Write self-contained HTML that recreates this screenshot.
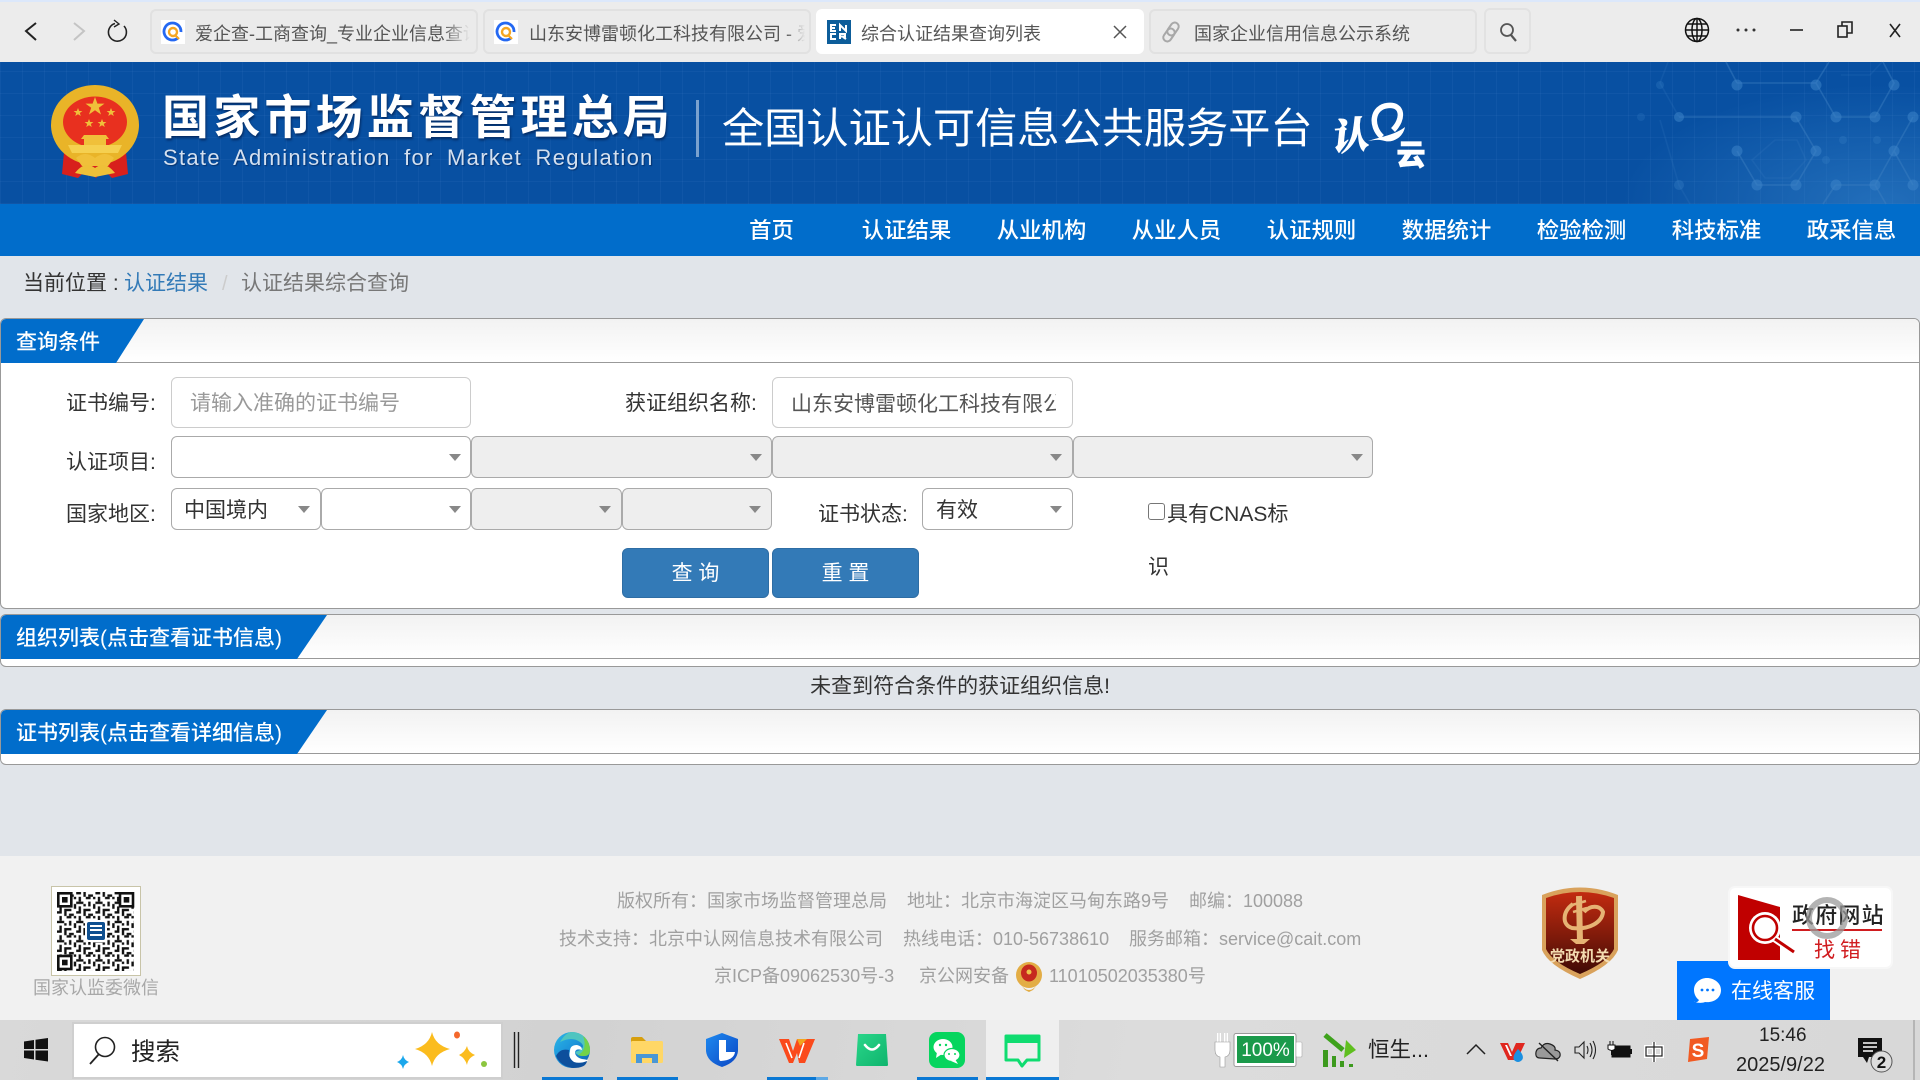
<!DOCTYPE html>
<html lang="zh-CN"><head><meta charset="utf-8"><title>综合认证结果查询列表</title>
<style>
*{box-sizing:border-box;margin:0;padding:0}
html,body{width:1920px;height:1080px;overflow:hidden;background:#e1e5ea}
body{position:relative;font-family:"Liberation Sans","Noto Sans CJK SC",sans-serif;color:#333}
.a{position:absolute}
.t{position:absolute;white-space:nowrap;line-height:30px;height:30px}
.tab{position:absolute;top:9px;width:328px;height:45px;background:#ebebeb;border:2px solid #e1e1e1;border-radius:6px}
.tt{position:absolute;top:19px;height:30px;line-height:30px;font-size:18px;color:#555;white-space:nowrap;overflow:hidden}
.nav{position:absolute;top:216px;width:135px;text-align:center;font-size:22.4px;font-weight:500;line-height:30px;color:#fff}
.panel{position:absolute;left:0;width:1920px;background:#fff;border:1px solid #999;border-radius:6px;overflow:hidden}
.head{position:absolute;left:0;top:0;width:100%;height:44px;background:linear-gradient(#f2f2f2,#fff);border-bottom:1px solid #999}
.blue{position:absolute;left:0;top:0;height:44px;background:#016dcb}
.ptxt{position:absolute;color:#fff;font-size:21px;font-weight:500;line-height:30px;height:30px;white-space:nowrap}
.lb{font-size:21px;color:#333}
.box{position:absolute;background:#fff;border:1px solid #ccc;border-radius:6px}
.sel{position:absolute;background:#fff;border:1px solid #aaa;border-radius:6px;height:42px}
.sel.d{background:#eee}
.sel i{position:absolute;right:9px;top:17px;width:0;height:0;border-left:6px solid transparent;border-right:6px solid transparent;border-top:7px solid #888}
.btn{position:absolute;top:548px;height:50px;background:#337ab7;border:1px solid #2e6da4;border-radius:6px;color:#fff;font-size:21px;line-height:49px;text-align:center}
.f{position:absolute;font-size:18px;line-height:24px;color:#a0a0a0;white-space:nowrap}
.ul{position:absolute;top:1077px;height:3px;background:#0a78d4}
</style></head><body>

<!-- browser chrome -->
<div class="a" style="left:0;top:0;width:1920px;height:62px;background:#ececec"></div>
<div class="a" style="left:0;top:0;width:1920px;height:2px;background:#dce8fb"></div>
<div class="tab" style="left:150px"></div>
<div class="tab" style="left:483px"></div>
<div class="tab" style="left:816px;background:#fff;border-color:#fff"></div>
<div class="tab" style="left:1149px"></div>
<div class="a" style="left:1484px;top:8px;width:47px;height:46px;background:#ececec;border:2px solid #e2e2e2;border-radius:6px"></div>
<div class="tt" style="left:195px;width:275px;-webkit-mask-image:linear-gradient(90deg,#000 90%,transparent)">爱企查-工商查询_专业企业信息查询</div>
<div class="tt" style="left:529px;width:276px;-webkit-mask-image:linear-gradient(90deg,#000 93%,transparent)">山东安博雷顿化工科技有限公司 - 爱企查</div>
<div class="tt" style="left:861px">综合认证结果查询列表</div>
<div class="tt" style="left:1194px">国家企业信用信息公示系统</div>

<!-- site header -->
<div class="a" style="left:0;top:62px;width:1920px;height:142px;background:radial-gradient(ellipse 260px 120px at 1880px 142px,rgba(60,140,210,.5),transparent),repeating-linear-gradient(90deg,rgba(120,170,230,.07) 0 1px,transparent 1px 22px),repeating-linear-gradient(0deg,rgba(120,170,230,.07) 0 1px,transparent 1px 22px),#0850a2"></div>
<div class="a" style="left:0;top:204px;width:1920px;height:52px;background:#016dcb"></div>
<div class="t" style="left:162px;top:90px;height:56px;line-height:56px;font-size:47px;font-weight:700;letter-spacing:4.2px;color:#fff;text-shadow:1px 2px 2px rgba(0,20,60,.6)">国家市场监督管理总局</div>
<div class="t" style="left:163px;top:144px;height:28px;line-height:28px;font-size:22px;letter-spacing:1.3px;word-spacing:6px;color:#d3e0f0;text-shadow:1px 1px 1px rgba(0,20,60,.5)">State Administration  for  Market Regulation</div>
<div class="a" style="left:696px;top:100px;width:3px;height:57px;background:#7ba2cf"></div>
<div class="t" style="left:722px;top:99px;height:60px;line-height:60px;font-size:42.2px;color:#fff">全国认证认可信息公共服务平台</div>
<div class="nav" style="left:704px">首页</div><div class="nav" style="left:839px">认证结果</div><div class="nav" style="left:974px">从业机构</div><div class="nav" style="left:1109px">从业人员</div><div class="nav" style="left:1244px">认证规则</div><div class="nav" style="left:1379px">数据统计</div><div class="nav" style="left:1514px">检验检测</div><div class="nav" style="left:1649px">科技标准</div><div class="nav" style="left:1784px">政采信息</div>

<!-- breadcrumb -->
<div class="t" style="left:23px;top:269px;font-size:21px;color:#333">当前位置 :</div>
<div class="t" style="left:124px;top:269px;font-size:21px;color:#337ab7">认证结果</div>
<div class="t" style="left:222px;top:269px;font-size:20px;color:#ccc">/</div>
<div class="t" style="left:241px;top:269px;font-size:21px;color:#777">认证结果综合查询</div>

<!-- panel 1 -->
<div class="panel" style="top:318px;height:291px"><div class="head"></div><div class="blue" style="width:143px;clip-path:polygon(0 0,100% 0,115px 100%,0 100%)"></div></div>
<div class="ptxt" style="left:16px;top:327.5px">查询条件</div>
<div class="t lb" style="left:66px;top:389px">证书编号:</div>
<div class="box" style="left:171px;top:377px;width:300px;height:51px"></div>
<div class="t" style="left:190px;top:389px;font-size:21px;color:#999">请输入准确的证书编号</div>
<div class="t lb" style="left:625px;top:389px">获证组织名称:</div>
<div class="box" style="left:772px;top:377px;width:301px;height:51px"></div>
<div class="t" style="left:791px;top:390px;width:265px;overflow:hidden;font-size:21px;color:#555">山东安博雷顿化工科技有限公司</div>
<div class="t lb" style="left:66px;top:448px">认证项目:</div>
<div class="sel" style="left:171px;top:436px;width:300px"><i></i></div>
<div class="sel d" style="left:471px;top:436px;width:301px"><i style="right:9px"></i></div>
<div class="sel d" style="left:772px;top:436px;width:301px"><i style="right:10px"></i></div>
<div class="sel d" style="left:1073px;top:436px;width:300px"><i style="right:9px"></i></div>
<div class="t lb" style="left:66px;top:500px">国家地区:</div>
<div class="sel" style="left:171px;top:488px;width:150px"><i style="right:10px"></i></div>
<div class="sel" style="left:321px;top:488px;width:150px"><i></i></div>
<div class="sel d" style="left:471px;top:488px;width:151px"><i style="right:10px"></i></div>
<div class="sel d" style="left:622px;top:488px;width:150px"><i style="right:10px"></i></div>
<div class="t" style="left:184px;top:496px;font-size:21px;color:#333">中国境内</div>
<div class="t lb" style="left:818px;top:500px">证书状态:</div>
<div class="sel" style="left:922px;top:488px;width:151px"><i style="right:10px"></i></div>
<div class="t" style="left:936px;top:496px;font-size:21px;color:#333">有效</div>
<div class="a" style="left:1148px;top:503px;width:17px;height:17px;background:#fff;border:1.5px solid #767676;border-radius:3px"></div>
<div class="t lb" style="left:1167px;top:500px">具有CNAS标</div>
<div class="t lb" style="left:1148px;top:553px">识</div>
<div class="btn" style="left:622px;width:147px">查 询</div>
<div class="btn" style="left:772px;width:147px">重 置</div>

<!-- panel 2, 3 -->
<div class="panel" style="top:614px;height:53px"><div class="head"></div><div class="blue" style="width:326px;clip-path:polygon(0 0,100% 0,296px 100%,0 100%)"></div></div>
<div class="ptxt" style="left:16px;top:623.5px">组织列表(点击查看证书信息)</div>
<div class="t" style="left:0;width:1920px;top:671.5px;text-align:center;font-size:21px;color:#333">未查到符合条件的获证组织信息!</div>
<div class="panel" style="top:709px;height:56px"><div class="head"></div><div class="blue" style="width:326px;clip-path:polygon(0 0,100% 0,296px 100%,0 100%)"></div></div>
<div class="ptxt" style="left:16px;top:719px">证书列表(点击查看详细信息)</div>

<!-- footer -->
<div class="a" style="left:0;top:856px;width:1920px;height:164px;background:#f1f1f1"></div>
<div class="f" style="left:33px;top:976px;color:#a8a8a8">国家认监委微信</div>
<div class="f" style="left:617px;top:889px">版权所有：国家市场监督管理总局</div>
<div class="f" style="left:907px;top:889px">地址：北京市海淀区马甸东路9号</div>
<div class="f" style="left:1189px;top:889px">邮编：100088</div>
<div class="f" style="left:559px;top:927px">技术支持：北京中认网信息技术有限公司</div>
<div class="f" style="left:903px;top:927px">热线电话：010-56738610</div>
<div class="f" style="left:1129px;top:927px">服务邮箱：service@cait.com</div>
<div class="f" style="left:714px;top:964px">京ICP备09062530号-3</div>
<div class="f" style="left:919px;top:964px">京公网安备</div>
<div class="f" style="left:1049px;top:964px">11010502035380号</div>

<!-- online service -->
<div class="a" style="left:1677px;top:961px;width:153px;height:59px;background:#0076ff"></div>

<!-- taskbar -->
<div class="a" style="left:0;top:1020px;width:1920px;height:60px;background:linear-gradient(100deg,#d9d9d9,#d2d2d2 30%,#dcdcdc 60%,#d8d8d8)"></div>
<div class="a" style="left:72px;top:1022px;width:431px;height:57px;background:#fff;border:2px solid #cfcfcf"></div>
<div class="a" style="left:986px;top:1020px;width:73px;height:60px;background:#efefef"></div>
<div class="ul" style="left:542px;width:61px"></div><div class="ul" style="left:617px;width:61px"></div><div class="ul" style="left:767px;width:49px"></div><div class="ul" style="left:816px;width:12px;background:#5ea9e6"></div><div class="ul" style="left:917px;width:61px"></div><div class="ul" style="left:986px;width:73px"></div>
<div class="t" style="left:131px;top:1038px;font-size:24.5px;color:#222">搜索</div>
<div class="t" style="left:1368px;top:1035px;font-size:21.5px;color:#222">恒生...</div>
<div class="t" style="left:1759px;top:1021px;font-size:19px;color:#222">15:46</div>
<div class="t" style="left:1736px;top:1050px;font-size:20px;color:#222">2025/9/22</div>
<div class="a" style="left:1913px;top:1020px;width:2px;height:60px;background:#b5b5b5"></div>

<svg class="a" style="left:0;top:0" width="1920" height="1080" viewBox="0 0 1920 1080">
<defs>
<pattern id="qr" width="19.2" height="19.2" patternUnits="userSpaceOnUse" x="57" y="892">
<rect width="19.2" height="19.2" fill="#fff"/>
<g fill="#111"><rect x="0" y="0" width="4.8" height="2.4"/><rect x="7.2" y="0" width="2.4" height="4.8"/><rect x="12" y="2.4" width="4.8" height="2.4"/><rect x="2.4" y="4.8" width="2.4" height="4.8"/><rect x="9.6" y="4.8" width="4.8" height="2.4"/><rect x="16.8" y="4.8" width="2.4" height="2.4"/><rect x="0" y="9.6" width="7.2" height="2.4"/><rect x="12" y="9.6" width="2.4" height="4.8"/><rect x="7.2" y="12" width="2.4" height="2.4"/><rect x="16.8" y="12" width="2.4" height="4.8"/><rect x="2.4" y="14.4" width="2.4" height="4.8"/><rect x="7.2" y="16.8" width="7.2" height="2.4"/></g>
</pattern>
<linearGradient id="shield" x1="0" y1="0" x2="0" y2="1"><stop offset="0" stop-color="#c22b10"/><stop offset=".55" stop-color="#7e1a0a"/><stop offset="1" stop-color="#3f0a05"/></linearGradient>
<linearGradient id="edge" x1="0" y1="0" x2="1" y2="1"><stop offset="0" stop-color="#2bb8e8"/><stop offset=".5" stop-color="#1b8fd8"/><stop offset="1" stop-color="#0f5fae"/></linearGradient>
<linearGradient id="bag" x1="0" y1="0" x2="1" y2="1"><stop offset="0" stop-color="#2ad68a"/><stop offset="1" stop-color="#0fb46d"/></linearGradient>
<linearGradient id="lsh" x1="0" y1="0" x2="1" y2="1"><stop offset="0" stop-color="#1e8af0"/><stop offset="1" stop-color="#0b46c4"/></linearGradient>
</defs>

<!-- toolbar icons -->
<path d="M36 23 L26 31 L36 40" fill="none" stroke="#222" stroke-width="2"/>
<path d="M74 23 L84 31 L74 40" fill="none" stroke="#c4c4c4" stroke-width="2"/>
<path d="M115 23.5 A9 9 0 1 0 124 26" fill="none" stroke="#222" stroke-width="1.6"/><path d="M114 20 L119 24 L114 27" fill="none" stroke="#222" stroke-width="1.4"/>
<rect x="161" y="20" width="24" height="24" fill="#fff"/><path d="M178 38 A8.5 8.5 0 1 1 181 32" fill="none" stroke="#2468f2" stroke-width="2.8"/><circle cx="173" cy="32" r="4" fill="none" stroke="#f5a623" stroke-width="2.4"/><path d="M175 35 L179 39" stroke="#f5a623" stroke-width="2.2"/>
<rect x="494" y="20" width="24" height="24" fill="#fff"/><path d="M511 38 A8.5 8.5 0 1 1 514 32" fill="none" stroke="#2468f2" stroke-width="2.8"/><circle cx="506" cy="32" r="4" fill="none" stroke="#f5a623" stroke-width="2.4"/><path d="M508 35 L512 39" stroke="#f5a623" stroke-width="2.2"/>
<rect x="827" y="20" width="24" height="24" fill="#0d5d9a"/><g fill="none" stroke="#fff" stroke-width="2"><path d="M836 25 H831 V31 H836 M831 28 H835"/><path d="M836 34 H831 V39 H836"/><path d="M840 31 V25 L846 31 V25"/><path d="M840 39 V34 H845 V36.5 H840 M843 37 L846 39"/></g>
<path d="M1114 26 L1126 38 M1126 26 L1114 38" stroke="#555" stroke-width="1.5"/>
<g fill="none" stroke="#a8a8a8" stroke-width="2"><rect x="1169" y="22" width="8" height="14" rx="4" transform="rotate(35 1173 29)"/><rect x="1165" y="28" width="8" height="14" rx="4" transform="rotate(35 1169 35)"/></g>
<circle cx="1507" cy="30" r="6" fill="none" stroke="#555" stroke-width="1.8"/><path d="M1511 35 L1516 41" stroke="#555" stroke-width="2.2"/>
<g fill="none" stroke="#111" stroke-width="1.5"><circle cx="1697" cy="30" r="11.5"/><ellipse cx="1697" cy="30" rx="5" ry="11.5"/><path d="M1697 18.5 V41.5 M1685.5 30 H1708.5 M1687 24 H1707 M1687 36 H1707"/></g>
<g fill="#333"><circle cx="1738" cy="30" r="1.5"/><circle cx="1746" cy="30" r="1.5"/><circle cx="1754" cy="30" r="1.5"/></g>
<path d="M1790 30 H1803" stroke="#222" stroke-width="1.6"/>
<g fill="none" stroke="#222" stroke-width="1.6"><rect x="1838" y="26" width="9" height="11"/><path d="M1842 26 V22 H1852 V33 H1847"/></g>
<path d="M1890 24 L1900 37 M1900 24 L1890 37" stroke="#222" stroke-width="1.6"/>

<!-- hex decoration -->
<g fill="none" stroke="#3e80c2" stroke-width="1.6" opacity=".45">
<path d="M1737 83 H1816 L1835.5 117 H1875 L1894 83 L1883 62 M1816 83 L1829 62 M1737 83 L1726 62"/>
<path d="M1679 117 H1796 L1816 151 L1796 185 H1757 L1737 151"/>
<path d="M1835.5 185 H1875 L1894 151 L1913 117 M1894 151 L1913 185 M1835.5 185 L1823 204 M1875 185 L1886 204"/>
<path d="M1679 117 L1660 83 L1668 62 M1660 120 L1679 185 L1690 204" opacity=".4"/>
<path d="M1841 75 L1870 75 L1882 62 M1775 140 L1797 140 L1806 160 L1790 178 L1765 178 L1752 160 Z" opacity=".4"/>
</g>
<g fill="#3c83c8" opacity=".55"><circle cx="1737" cy="85" r="5.5"/><circle cx="1816" cy="85" r="5.5"/><circle cx="1894" cy="85" r="5.5"/><circle cx="1836" cy="117" r="5.5"/><circle cx="1875" cy="117" r="5.5"/><circle cx="1913" cy="117" r="5.5"/><circle cx="1796" cy="117" r="5.5"/><circle cx="1679" cy="117" r="5"/><circle cx="1737" cy="151" r="5.5"/><circle cx="1816" cy="151" r="5.5"/><circle cx="1894" cy="151" r="5.5"/><circle cx="1757" cy="185" r="5.5"/><circle cx="1796" cy="185" r="5.5"/><circle cx="1836" cy="185" r="5.5"/><circle cx="1875" cy="185" r="5.5"/><circle cx="1913" cy="185" r="5.5"/><circle cx="1660" cy="85" r="4" opacity=".5"/><circle cx="1641" cy="117" r="4" opacity=".4"/><circle cx="1679" cy="185" r="5" opacity=".6"/><circle cx="1826" cy="160" r="4" opacity=".5"/><circle cx="1843" cy="140" r="4" opacity=".5"/><circle cx="1877" cy="140" r="4" opacity=".5"/></g>

<!-- emblem -->
<path d="M64 152 L62 174 L78 178 L86 170 L96 178 L104 170 L112 178 L128 174 L126 152 Z" fill="#d8201c"/>
<ellipse cx="95" cy="125" rx="44" ry="40" fill="#e9b428"/>
<ellipse cx="95" cy="122" rx="32" ry="25.5" fill="#e8301f"/>
<g fill="#f0c03a">
<polygon points="95,97 97.4,103.6 104.5,103.6 98.8,107.7 101,114.5 95,110.3 89,114.5 91.2,107.7 85.5,103.6 92.6,103.6"/>
<polygon points="78,108 79.2,111 82.4,111 79.8,113 80.8,116 78,114.2 75.2,116 76.2,113 73.6,111 76.8,111"/>
<polygon points="111,108 112.2,111 115.4,111 112.8,113 113.8,116 111,114.2 108.2,116 109.2,113 106.6,111 109.8,111"/>
<polygon points="89,119 90.2,122 93.4,122 90.8,124 91.8,127 89,125.2 86.2,127 87.2,124 84.6,122 87.8,122"/>
<polygon points="102,119 103.2,122 106.4,122 103.8,124 104.8,127 102,125.2 99.2,127 100.2,124 97.6,122 100.8,122"/>
<path d="M84 135 H106 L109 139 H106 V145 H84 V139 H81 Z"/>
<path d="M68 145 H122 L118 153 H72 Z" fill="#f5d050"/>
<path d="M76 158 Q85 150 95 158 Q105 150 114 158 L108 166 H82 Z"/>
<path d="M75 173 Q85 160 95 168 Q105 160 115 173 Q105 175 95 177 Q85 175 75 173 Z" fill="#eec038"/>
</g>

<!-- 认云 logo -->
<text x="0" y="0" font-family="Noto Serif CJK SC,serif" font-weight="900" font-size="37" fill="#fff" stroke="#fff" stroke-width=".8" transform="translate(1332 151) rotate(-6) skewX(-12)">认</text>
<path d="M1382 137 C1370 126 1372 107 1388 105.5 C1403 104 1404 119 1393 130" fill="none" stroke="#fff" stroke-width="5.5"/>
<path d="M1368 141 C1380 137 1395 135 1405 127 C1403 138 1392 143 1385 141 C1378 139 1374 140 1368 141 Z" fill="#fff"/>
<text x="1396.5" y="165" font-family="Noto Sans CJK SC,sans-serif" font-weight="900" font-size="29" fill="#fff" stroke="#fff" stroke-width=".6">云</text>

<!-- QR -->
<rect x="51.5" y="886.5" width="89" height="89" fill="#fff" stroke="#c8c4a8"/>
<rect x="57" y="892" width="77" height="79" fill="url(#qr)"/>
<g fill="#fff" stroke="#111" stroke-width="2.6"><rect x="58.3" y="893.3" width="13" height="13"/><rect x="120" y="893.3" width="13" height="13"/><rect x="58.3" y="956" width="13" height="13"/></g>
<g fill="#111"><rect x="62" y="897" width="5.6" height="5.6"/><rect x="123.7" y="897" width="5.6" height="5.6"/><rect x="62" y="959.7" width="5.6" height="5.6"/></g>
<rect x="85" y="920" width="22" height="22" fill="#fff"/><rect x="87" y="922" width="18" height="18" rx="2" fill="#0e4f90"/><path d="M90 926 H102 M90 930 H102 M90 935 H102" stroke="#fff" stroke-width="2"/>

<!-- police emblem -->
<ellipse cx="1029" cy="975" rx="13" ry="13" fill="#e3ad45"/><ellipse cx="1029" cy="973" rx="8" ry="8.5" fill="#c62a1f"/><circle cx="1029" cy="972" r="2.5" fill="#eec44a"/><path d="M1021 985 Q1029 995 1037 985 L1033 990 L1029 992 L1025 990 Z" fill="#e3ad45"/>

<!-- party badge -->
<path d="M1542 895 Q1580 880 1618 895 V950 Q1612 965 1580 979 Q1548 965 1542 950 Z" fill="#d9a25c"/>
<path d="M1546 898 Q1580 886 1614 898 V949 Q1608 962 1580 974 Q1552 962 1546 949 Z" fill="url(#shield)"/>
<g fill="none" stroke="#e6b374"><path d="M1579 896 L1580 942" stroke-width="6"/><path d="M1572 905 L1586 901 M1573 912 L1587 908" stroke-width="2.5"/><path d="M1573 904 C1562 912 1562 925 1572 928 C1590 930 1602 922 1603 912 C1600 905 1590 905 1584 912" stroke-width="4"/></g>
<path d="M1570 939 H1590 L1584 944 H1576 Z" fill="#e6b374"/>
<text x="1580" y="961" text-anchor="middle" font-family="Noto Sans CJK SC,sans-serif" font-weight="700" font-size="15" fill="#f3dbb0">党政机关</text>

<!-- gov find error -->
<rect x="1729" y="887" width="163" height="81" rx="6" fill="#fff" stroke="#f7f7f7" stroke-width="2"/>
<path d="M1738 895 L1780 907 V960 H1738 Z" fill="#c00000"/>
<circle cx="1765" cy="928" r="16" fill="#fff"/><circle cx="1765" cy="928" r="12" fill="#fff" stroke="#c00000" stroke-width="2.6"/>
<path d="M1775 939 L1794 952" stroke="#fff" stroke-width="7"/><path d="M1775 939 L1794 952" stroke="#c00000" stroke-width="3"/>
<text x="1792" y="923" font-family="Noto Sans CJK SC,sans-serif" font-size="22" letter-spacing="1.2" font-weight="500" fill="#222">政府网站</text>
<rect x="1792" y="929" width="90" height="2" fill="#d01c1f"/>
<text x="1814" y="957" font-family="Noto Sans CJK SC,sans-serif" font-size="21" letter-spacing="5" fill="#d01c1f">找错</text>
<circle cx="1827" cy="918" r="18" fill="none" stroke="#999" stroke-width="6" opacity=".75"/>

<!-- online service icon+text -->
<path d="M1707 978 C1700 978 1694 983 1694 990 C1694 994 1696 998 1699 1000 C1698 1002 1696 1003 1694 1001.5 C1698 1003.5 1703 1003 1705 1002 C1714 1003 1721 998 1721 990 C1721 983 1714 978 1707 978 Z" fill="#fff"/>
<g fill="#0076ff"><circle cx="1702" cy="990" r="1.4"/><circle cx="1707.5" cy="990" r="1.4"/><circle cx="1713" cy="990" r="1.4"/></g>
<text x="1731" y="998" font-family="Noto Sans CJK SC,sans-serif" font-size="21" fill="#fff">在线客服</text>

<!-- taskbar icons -->
<g fill="#111"><polygon points="24,1041.5 34,1040 34,1049 24,1049"/><polygon points="35.5,1039.8 48,1038 48,1049 35.5,1049"/><polygon points="24,1050.5 34,1050.5 34,1059.5 24,1058"/><polygon points="35.5,1050.5 48,1050.5 48,1061.5 35.5,1059.8"/></g>
<circle cx="105" cy="1047" r="9.5" fill="none" stroke="#222" stroke-width="1.6"/><path d="M99 1054 L90 1064" stroke="#222" stroke-width="1.8"/>
<path d="M432 1032 Q435 1045 450 1049 Q435 1053 432 1066 Q429 1053 415 1049 Q429 1045 432 1032 Z" fill="#fbbc1e"/>
<path d="M467 1046 Q468 1052 475 1055 Q468 1058 467 1065 Q465 1058 459 1055 Q465 1052 467 1046 Z" fill="#fbbc1e"/>
<path d="M403 1055 Q404 1060 409 1062 Q404 1064 403 1069 Q402 1064 397 1062 Q402 1060 403 1055 Z" fill="#1aa7ec"/>
<ellipse cx="457" cy="1035" rx="3" ry="3.5" fill="#f4682c"/><circle cx="484" cy="1064" r="3" fill="#8cc63f"/>
<path d="M514.5 1032 V1068 M518.5 1032 V1068" stroke="#222" stroke-width="1.4"/>

<!-- edge -->
<circle cx="572" cy="1050" r="18" fill="url(#edge)"/>
<path d="M572 1032 A18 18 0 0 1 590 1050 Q590 1056 584 1056 Q577 1056 575 1052 Q588 1048 580 1042 Q572 1036 560 1042 Q566 1032 572 1032 Z" fill="#4fc5c0"/>
<path d="M583 1036 A18 18 0 0 1 590 1050 Q590 1056 584 1056 Q580 1056 578 1055 Q588 1050 583 1036 Z" fill="#73d24a"/>
<path d="M570 1051 Q570 1045 577 1045 Q582 1046 582 1050 Q576 1048 575 1052 Q575 1057 582 1059 Q590 1060 587 1061 Q580 1066 573 1064 Q568 1059 570 1051 Z" fill="#fff"/>
<path d="M556 1056 Q560 1066 573 1068 Q586 1068 587 1061 Q580 1064 574 1062 Q568 1058 569 1050 Q560 1048 556 1056 Z" fill="#0d4f9c"/>
<!-- folder -->
<path d="M631 1039 Q631 1037 633 1037 H642 L646 1041 V1046 H631 Z" fill="#d79f0e"/>
<rect x="631" y="1041" width="32" height="22" rx="1.5" fill="#ffd766"/>
<path d="M636 1063 V1054 H658 V1063 H652 V1058 H642 V1063 Z" fill="#4a97d6"/>
<!-- L shield -->
<path d="M722 1033 L738 1039 V1051 Q737 1062 722 1067 Q707 1062 706 1051 V1039 Z" fill="url(#lsh)"/>
<path d="M719 1040 H726 V1052 H735 Q734 1060 721 1061 Q719 1061 719 1058 Z" fill="#fff"/>
<!-- W -->
<path d="M779 1039 H789 L793 1051 L797 1039 H815 L805 1063 H799 L797 1053 L793 1063 H789 Z" fill="#fb4a1c"/><path d="M797 1039 H807 L800 1046 Z" fill="#f2a51e"/><path d="M786 1043 L792 1058 M804 1043 L799 1058" stroke="#fff" stroke-width="1.6"/>
<!-- bag -->
<path d="M858 1034 H886 L888 1065 Q888 1066 886 1066 H858 Q856 1066 856 1065 Z" fill="url(#bag)"/>
<path d="M865 1045 Q872 1054 879 1045" fill="none" stroke="#fff" stroke-width="2.6" stroke-linecap="round"/>
<!-- wechat -->
<rect x="929" y="1032" width="36" height="36" rx="8" fill="#06d55e"/>
<ellipse cx="943" cy="1047" rx="9.5" ry="8" fill="#fff"/><path d="M937 1052 L936 1058 L942 1054 Z" fill="#fff"/>
<ellipse cx="952" cy="1055" rx="8" ry="6.5" fill="#fff" stroke="#06d55e" stroke-width="1.2"/><path d="M955 1059 L958 1064 L951 1061 Z" fill="#fff"/>
<g fill="#06d55e"><circle cx="940" cy="1045" r="1.2"/><circle cx="946" cy="1045" r="1.2"/><circle cx="949" cy="1054" r="1"/><circle cx="955" cy="1054" r="1"/></g>
<!-- chat tile -->
<path d="M1006 1036 H1039 V1060 H1027 L1022 1066 L1018 1060 H1006 Z" fill="none" stroke="#0fdc70" stroke-width="3" stroke-linejoin="round"/>
<rect x="1005" y="1035" width="35" height="8" fill="#0fdc70"/>
<!-- tray -->
<path d="M1219 1033 V1042 M1226 1033 V1042" stroke="#fff" stroke-width="4"/><path d="M1219 1033 V1042 M1226 1033 V1042" stroke="#888" stroke-width="1" opacity=".4"/>
<path d="M1215 1042 H1230 V1050 Q1230 1056 1225 1057 V1067 H1220 V1057 Q1215 1056 1215 1050 Z" fill="#fff" stroke="#999" stroke-width=".6"/>
<rect x="1234" y="1033.5" width="62" height="33" rx="2" fill="#fff" stroke="#999"/><rect x="1296" y="1042" width="6" height="15" rx="1" fill="#fff" stroke="#aaa" stroke-width=".6"/>
<rect x="1237" y="1036" width="57" height="27" fill="#1b9a4b"/>
<text x="1265.5" y="1056" text-anchor="middle" font-family="Liberation Sans,sans-serif" font-size="19" fill="#fff">100%</text>
<path d="M1325 1035 L1343 1050" stroke="#3ea21c" stroke-width="5" fill="none"/><path d="M1346 1040 L1356 1050 L1344 1058 Z" fill="#5fbf1f"/>
<g fill="#3d9a1e"><rect x="1323" y="1050" width="5" height="17"/><rect x="1332" y="1056" width="4" height="11"/><rect x="1340" y="1061" width="4" height="6"/><rect x="1349" y="1064" width="4" height="3"/></g>
<path d="M1467 1054 L1476 1045 L1485 1054" fill="none" stroke="#222" stroke-width="1.5"/>
<path d="M1500 1043 H1508 L1512 1052 L1516 1043 H1525 L1517 1060 H1508 Z" fill="#e0271f"/><path d="M1505 1045 H1507 L1512 1056 L1510 1056 Z" fill="#fff"/><path d="M1518 1049 Q1525 1056 1522 1060 Q1518 1064 1514 1060 Q1512 1056 1518 1049 Z" fill="#1b8fe0"/>
<path d="M1540 1058 Q1535 1058 1536 1052 Q1537 1048 1541 1048 Q1544 1042 1550 1044 Q1556 1046 1555 1050 Q1561 1051 1560 1056 Q1559 1059 1555 1059 Z" fill="#9a9a9a" stroke="#222" stroke-width="1.2"/><path d="M1539 1043 L1558 1061" stroke="#222" stroke-width="1.4"/>
<path d="M1575 1047 H1579 L1584 1042 V1058 L1579 1053 H1575 Z M1587 1046 Q1589 1050 1587 1054 M1590 1043 Q1594 1050 1590 1057 M1593 1041 Q1598 1050 1593 1059" fill="none" stroke="#222" stroke-width="1.1"/>
<rect x="1612" y="1046" width="18" height="11" fill="#111" stroke="#111"/><rect x="1630" y="1049" width="2" height="5" fill="#111"/><path d="M1610 1041 V1045 M1613 1041 V1045 M1608 1045 H1615 V1049 Q1612 1052 1608 1049 Z M1611.5 1050 V1055" fill="#fff" stroke="#111"/>
<g fill="none" stroke="#fff" stroke-width="4"><path d="M1654 1042 V1062"/><rect x="1646" y="1047" width="16" height="9"/></g>
<g fill="none" stroke="#222" stroke-width="1.2"><path d="M1654 1042 V1062"/><rect x="1646" y="1047" width="16" height="9"/></g>
<path d="M1690 1039 L1709 1037 L1707 1059 L1688 1062 Z" fill="#f15a22"/><text x="1698" y="1057" text-anchor="middle" font-family="Liberation Sans,sans-serif" font-weight="700" font-size="19" fill="#fff">S</text>
<path d="M1858 1038 H1882 V1057 H1869 L1867 1063 L1863 1057 H1858 Z" fill="#111"/>
<path d="M1863 1043 H1877 M1863 1047 H1877 M1863 1051 H1873" stroke="#fff" stroke-width="1.4"/>
<circle cx="1881.5" cy="1061.5" r="10.5" fill="#ddd" stroke="#555" stroke-width="1"/>
<text x="1881.5" y="1068" text-anchor="middle" font-family="Liberation Sans,sans-serif" font-weight="700" font-size="17" fill="#111">2</text>
</svg>
</body></html>
